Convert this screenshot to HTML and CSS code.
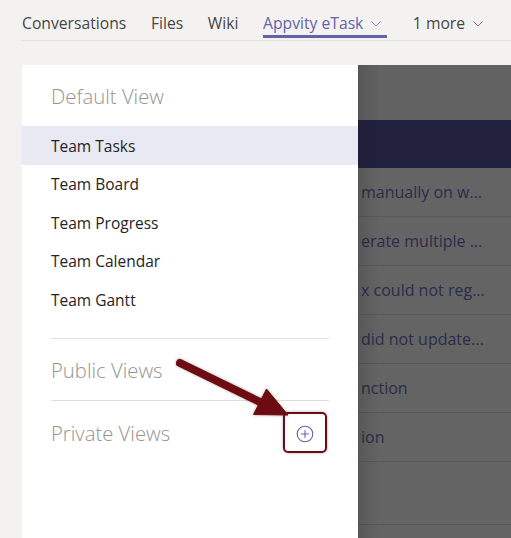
FILE: index.html
```html
<!DOCTYPE html>
<html>
<head>
<meta charset="utf-8">
<link rel="stylesheet" href="styles.css">
</head>
<body>
<div class="page">
  <nav class="tabs">
    <span class="tab">Conversations</span>
    <span class="tab">Files</span>
    <span class="tab">Wiki</span>
    <span class="tab active">Appvity eTask <svg class="chev" viewBox="0 0 10 6" width="10" height="6"><path d="M0.5 0.5 L5 5 L9.5 0.5" fill="none" stroke="currentColor" stroke-width="1"/></svg></span>
    <span class="tab">1 more <svg class="chev" viewBox="0 0 10 6" width="10" height="6"><path d="M0.5 0.5 L5 5 L9.5 0.5" fill="none" stroke="currentColor" stroke-width="1"/></svg></span>
  </nav>
  <div class="main">
    <aside class="panel">
      <div class="heading">Default View</div>
      <ul class="views">
        <li class="view selected">Team Tasks</li>
        <li class="view">Team Board</li>
        <li class="view">Team Progress</li>
        <li class="view">Team Calendar</li>
        <li class="view">Team Gantt</li>
      </ul>
      <div class="sep first"></div>
      <div class="heading section">Public Views</div>
      <div class="sep"></div>
      <div class="heading section private">
        <span>Private Views</span>
        <svg class="plus" viewBox="0 0 18 18" width="18" height="18"><circle cx="9" cy="9" r="7.8" fill="none" stroke="#6264a7" stroke-width="1.1"/><path d="M9 5.2 V12.8 M5.2 9 H12.8" stroke="#6264a7" stroke-width="1.1"/></svg>
      </div>
    </aside>
    <section class="dimmed">
      <div class="dim-top"></div>
      <div class="dim-band"></div>
      <div class="row">manually on w...</div>
      <div class="row">erate multiple ...</div>
      <div class="row">x could not reg...</div>
      <div class="row">did not update...</div>
      <div class="row">nction</div>
      <div class="row">ion</div>
      <div class="row tall"></div>
      <div class="row"></div>
    </section>
  </div>
  <div class="callout"></div>
  <svg class="arrow" viewBox="0 0 511 538" width="511" height="538">
    <g fill="#6e0a12" stroke="#6e0a12">
      <line x1="180" y1="363" x2="262" y2="403" stroke-width="8" stroke-linecap="round"/>
      <polygon points="288,415 253.5,414.5 266.5,389" stroke-width="1" stroke-linejoin="round"/>
    </g>
  </svg>
</div>
</body>
</html>
```

FILE: styles.css
```css
* { box-sizing: border-box; }
html, body { margin: 0; padding: 0; }
body {
  background: #f3f2f1;
  font-family: "Open Sans", "Noto Sans", sans-serif;
  color: #252423;
  overflow: hidden;
}
.page {
  position: relative;
  width: 511px;
  height: 538px;
  overflow: hidden;
}
.tabs {
  display: flex;
  align-items: flex-start;
  height: 41px;
  margin-left: 22px;
  border-bottom: 1px solid #e3e1df;
}
.tab {
  display: flex;
  align-items: center;
  gap: 8px;
  height: 38px;
  padding-top: 10px;
  line-height: 24px;
  margin-right: 24.6px;
  font-size: 15.7px;
  color: #484644;
  border-bottom: 3px solid transparent;
}
.tab.active {
  color: #6264a7;
  border-bottom-color: #6264a7;
  padding-right: 6px;
  margin-right: 25.5px;
}
.chev { color: #8a8886; margin-top: 2px; }
.tab.active .chev { color: #8b8cc7; }
.main {
  display: flex;
  margin-top: 24px;
  margin-left: 22px;
  height: 473px;
}
.panel {
  width: 336px;
  background: #fff;
  flex: none;
}
.heading {
  height: 61px;
  display: flex;
  align-items: center;
  padding: 0 29px;
  font-size: 20.3px;
  font-weight: 300;
  color: #959391;
}
.views { list-style: none; margin: 0; padding: 0; }
.view {
  height: 38.5px;
  display: flex;
  align-items: center;
  padding: 0 29px;
  font-size: 15.5px;
  color: #252423;
}
.view.selected { background: #e9e9f3; height: 39px; }
.sep {
  height: 1px;
  background: #e1dfdd;
  margin: 0 29px;
}
.sep.first { margin-top: 19px; }
.private {
  justify-content: space-between;
  height: 64px;
  padding-right: 44px;
}
.plus { display: block; margin-top: 1px; }
.dimmed {
  flex: 1;
  background: #646464;
  position: relative;
  overflow: hidden;
}
.dimmed::before {
  content: "";
  position: absolute;
  left: 0; top: 0; bottom: 0;
  width: 22px;
  background: linear-gradient(to right, rgba(0,0,0,0.12), rgba(0,0,0,0));
  pointer-events: none;
}
.dim-top { height: 55px; background: #626262; }
.dim-band { height: 48px; background: #22223f; }
.row {
  height: 49px;
  border-bottom: 1px solid #595959;
  display: flex;
  align-items: center;
  padding-left: 3px;
  font-size: 16px;
  color: #2c2c4a;
  white-space: nowrap;
}
.row.tall { height: 63px; }
.callout {
  position: absolute;
  left: 283px;
  top: 412px;
  width: 44px;
  height: 41px;
  border: 2px solid #6e0a12;
  border-radius: 5px;
  box-shadow: 0 0 3px rgba(0,0,0,0.35);
}
.arrow {
  position: absolute;
  left: 0;
  top: 0;
  pointer-events: none;
  filter: drop-shadow(0 0 1.5px rgba(0,0,0,0.35));
}
```
